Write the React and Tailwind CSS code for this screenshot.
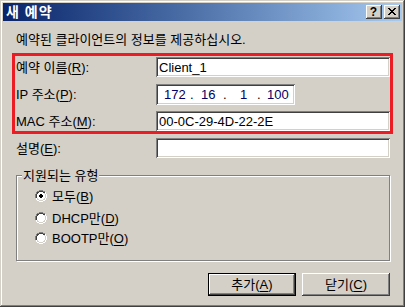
import React from "react";

const raised =
  "shadow-[inset_-1px_-1px_#404040,inset_1px_1px_#ffffff,inset_-2px_-2px_#808080,inset_2px_2px_#d4d0c8]";
const sunken =
  "shadow-[inset_1px_1px_#808080,inset_-1px_-1px_#ffffff,inset_2px_2px_#404040,inset_-2px_-2px_#d4d0c8]";

function Radio({ checked }) {
  return (
    <svg width="12" height="12" viewBox="0 0 12 12" shapeRendering="crispEdges" className="shrink-0">
      <path d="M4 0h4v1H4zM2 1h2v1H2zM8 1h2v1H8zM1 2h1v2H1zM0 4h1v4H0z" fill="#808080" />
      <path d="M11 4h1v4h-1zM10 8h1v2h-1zM8 10h2v1H8zM4 11h4v1H4zM2 10h2v1H2zM10 2h1v2h-1zM1 8h1v2H1z" fill="#ffffff" />
      <path d="M4 1h4v1H4zM2 2h2v1H2zM8 2h2v1H8zM1 4h1v4H1zM2 3h1v1H2z" fill="#404040" />
      <path d="M10 4h1v4h-1zM9 8h1v1H9zM8 9h2v1H8zM4 10h4v1H4zM2 9h2v1H2zM9 3h1v1H9zM2 8h1v1H2z" fill="#d4d0c8" />
      <path d="M4 2h4v1H4zM3 3h6v1H3zM2 4h8v4H2zM3 8h6v1H3zM4 9h4v1H4z" fill="#ffffff" />
      {checked && <path d="M5 4h2v1H5zM4 5h4v2H4zM5 7h2v1H5z" fill="#000000" />}
    </svg>
  );
}

function Row({ label, children }) {
  return (
    <div className="flex h-[20px] items-center">
      <div className="w-[140px] shrink-0">{label}</div>
      {children}
    </div>
  );
}

export default function App() {
  return (
    <div
      className="relative w-[405px] h-[307px] bg-[#d4d0c8] p-[3px] flex flex-col text-[13px] leading-[15px] text-black shadow-[inset_-1px_-1px_#404040,inset_1px_1px_#d4d0c8,inset_-2px_-2px_#808080,inset_2px_2px_#ffffff]"
      style={{ fontFamily: '"Liberation Sans", "Noto Sans CJK KR", sans-serif' }}
    >
      {/* Title bar */}
      <div className="h-[18px] flex items-center bg-gradient-to-r from-[#0a246a] to-[#a6caf0] pl-[3px] pr-[2px]">
        <div className="text-white font-bold text-[14px] leading-[16px] flex-1 tracking-[1px]">새 예약</div>
        <div className="flex">
          <div className={`w-[16px] h-[14px] bg-[#d4d0c8] ${raised} flex items-center justify-center text-[12px] font-bold leading-none mr-[2px]`}>
            <span className="-mt-[1px] -ml-[1px]">?</span>
          </div>
          <div className={`w-[16px] h-[14px] bg-[#d4d0c8] ${raised} flex items-center justify-center`}>
            <svg width="8" height="7" viewBox="0 0 8 7" shapeRendering="crispEdges" className="-mt-[1px] -ml-[1px]">
              <path d="M0 0h2v1H0zM6 0h2v1H6zM1 1h2v1H1zM5 1h2v1H5zM2 2h4v1H2zM3 3h2v1H3zM2 4h4v1H2zM1 5h2v1H1zM5 5h2v1H5zM0 6h2v1H0zM6 6h2v1H6z" fill="#000" />
            </svg>
          </div>
        </div>
      </div>

      {/* Content */}
      <div className="flex-1 flex flex-col pl-[13px] pr-[12px]">
        <div className="mt-[11px] h-[15px]">예약된 클라이언트의 정보를 제공하십시오.</div>

        <div className="mt-[10px] flex flex-col gap-[7px]">
          <Row label={<span>예약 이름(<u className="underline-offset-2">R</u>):</span>}>
            <div className={`w-[234px] h-[20px] bg-white ${sunken} flex items-center pl-[3px]`}>Client_1</div>
          </Row>
          <Row label={<span>IP 주소(<u className="underline-offset-2">P</u>):</span>}>
            <div className={`w-[139px] h-[21px] bg-white ${sunken} flex items-center text-[#000066] relative`}>
              <span className="absolute left-[8px]">172</span>
              <span className="absolute left-[34px] text-black">.</span>
              <span className="absolute left-[45px]">16</span>
              <span className="absolute left-[67px] text-black">.</span>
              <span className="absolute left-[84px]">1</span>
              <span className="absolute left-[101px] text-black">.</span>
              <span className="absolute left-[111px]">100</span>
            </div>
          </Row>
          <Row label={<span>MAC 주소(<u className="underline-offset-2">M</u>):</span>}>
            <div className={`w-[234px] h-[20px] bg-white ${sunken} flex items-center pl-[3px]`}>00-0C-29-4D-22-2E</div>
          </Row>
          <Row label={<span>설명(<u className="underline-offset-2">E</u>):</span>}>
            <div className={`w-[234px] h-[20px] bg-white ${sunken}`}></div>
          </Row>
        </div>

        {/* Group box */}
        <div className="relative mt-[17px] w-[374px] h-[86px] border border-[#808080] shadow-[inset_1px_1px_#ffffff,1px_1px_#ffffff] pl-[18px] pt-[10px] flex flex-col">
          <div className="absolute -top-[8px] left-[5px] px-[1px] bg-[#d4d0c8]">지원되는 유형</div>
          <div className="flex items-center gap-[5px] h-[20px]">
            <Radio checked />
            <span>모두(<u className="underline-offset-2">B</u>)</span>
          </div>
          <div className="flex items-center gap-[5px] h-[20px] mt-[2px]">
            <Radio />
            <span>DHCP만(<u className="underline-offset-2">D</u>)</span>
          </div>
          <div className="flex items-center gap-[5px] h-[20px]">
            <Radio />
            <span>BOOTP만(<u className="underline-offset-2">O</u>)</span>
          </div>
        </div>

        {/* Buttons */}
        <div className="mt-[12px] flex justify-end gap-[6px]">
          <div className="w-[88px] h-[23px] border border-black">
            <div className={`w-full h-full bg-[#d4d0c8] ${raised} flex items-center justify-center`}>
              추가(<u className="underline-offset-2">A</u>)
            </div>
          </div>
          <div className={`w-[88px] h-[23px] bg-[#d4d0c8] ${raised} flex items-center justify-center`}>
            닫기(<u className="underline-offset-2">C</u>)
          </div>
        </div>
      </div>

      {/* Red annotation overlay */}
      <div className="absolute left-[12px] top-[53px] w-[381px] h-[81px] border-[3px] border-[#ec1c24] pointer-events-none"></div>
    </div>
  );
}
